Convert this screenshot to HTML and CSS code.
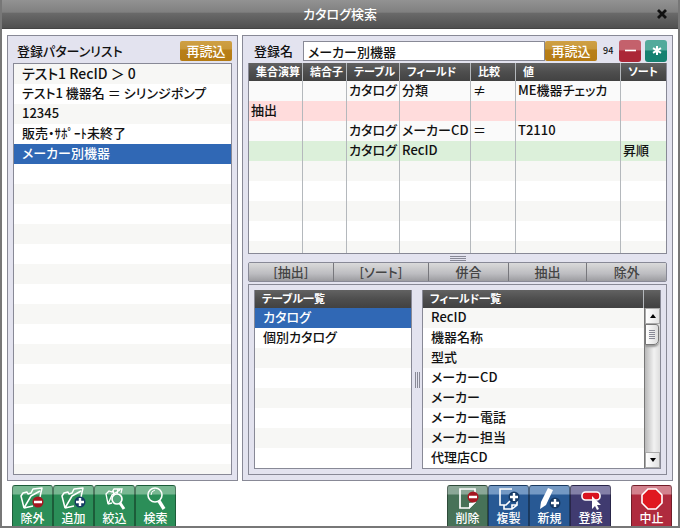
FILE: index.html
```html
<!DOCTYPE html>
<html lang="ja">
<head>
  <meta charset="UTF-8">
  <meta name="viewport" content="width=device-width, initial-scale=1.0">
  <title>カタログ検索</title>
  <link rel="stylesheet" href="styles.css">
</head>
<body>
  <header class="title-bar">
    <h1>カタログ検索</h1>
    <button class="close-btn" type="button" aria-label="閉じる">
      <svg width="10" height="10" viewBox="0 0 10 10"><path d="M1 1l8 8M9 1l-8 8" stroke="#111" stroke-width="2.8"/></svg>
    </button>
  </header>

  <main class="content">
    <section class="panel pattern-panel">
      <div class="panel-head">
        <h2>登録パターンリスト</h2>
        <button class="reload-btn" type="button">再読込</button>
      </div>
      <ul class="list pattern-list">
        <li><span class="wide">テスト1 RecID ＞ 0</span></li>
        <li>テスト1 機器名 ＝ シリンジポンプ</li>
        <li>12345</li>
        <li>販売・ｻﾎﾟｰﾄ未終了</li>
        <li class="selected">メーカー別機器</li>
      </ul>
    </section>

    <section class="panel detail-panel">
      <div class="panel-head name-row">
        <label for="patternName">登録名</label>
        <input type="text" id="patternName" value="メーカー別機器">
        <button class="reload-btn" type="button">再読込</button>
        <span class="count">94</span>
        <button class="square-btn remove" type="button" aria-label="削除">
          <svg width="22" height="22" viewBox="0 0 22 22"><path d="M6 10.5h11" stroke="#fff" stroke-width="1.6"/></svg>
        </button>
        <button class="square-btn all" type="button" aria-label="すべて">
          <svg width="22" height="22" viewBox="0 0 22 22"><path d="M12 6v9M8 8.2l8 4.6M16 8.2l-8 4.6" stroke="#fff" stroke-width="2"/></svg>
        </button>
      </div>

      <div class="criteria">
        <table>
          <colgroup>
            <col class="col-set"><col class="col-join"><col class="col-table"><col class="col-field"><col class="col-compare"><col><col class="col-sort">
          </colgroup>
          <thead>
            <tr><th>集合演算</th><th>結合子</th><th>テーブル</th><th>フィールド</th><th>比較</th><th>値</th><th>ソート</th></tr>
          </thead>
          <tbody>
            <tr><td></td><td></td><td>カタログ</td><td>分類</td><td>≠</td><td>ME機器チェッカ</td><td></td></tr>
            <tr class="extract"><td>抽出</td><td></td><td></td><td></td><td></td><td></td><td></td></tr>
            <tr><td></td><td></td><td>カタログ</td><td>メーカーCD</td><td>＝</td><td>T2110</td><td></td></tr>
            <tr class="sort"><td></td><td></td><td>カタログ</td><td>RecID</td><td></td><td></td><td>昇順</td></tr>
            <tr class="rest"><td></td><td></td><td></td><td></td><td></td><td></td><td></td></tr>
          </tbody>
        </table>
      </div>

      <div class="grip-row"><span class="grip"></span></div>

      <div class="actions">
        <button type="button">[抽出]</button>
        <button type="button">[ソート]</button>
        <button type="button">併合</button>
        <button type="button">抽出</button>
        <button type="button">除外</button>
      </div>

      <div class="sources">
        <div class="source">
          <h3>テーブル一覧</h3>
          <ul class="list">
            <li class="selected">カタログ</li>
            <li>個別カタログ</li>
          </ul>
        </div>
        <div class="grip-col"><span class="grip vertical"></span></div>
        <div class="source">
          <h3 class="with-corner">フィールド一覧</h3>
          <div class="scroll-area">
            <ul class="list">
              <li>RecID</li>
              <li>機器名称</li>
              <li>型式</li>
              <li>メーカーCD</li>
              <li>メーカー</li>
              <li>メーカー電話</li>
              <li>メーカー担当</li>
              <li>代理店CD</li>
            </ul>
            <div class="scrollbar">
              <button type="button" aria-label="上へ"><svg width="6" height="4" viewBox="0 0 6 4"><path d="M3 0l3 4H0z"/></svg></button>
              <div class="track"><span class="thumb"><span class="grip small"></span></span></div>
              <button type="button" aria-label="下へ"><svg width="6" height="4" viewBox="0 0 6 4"><path d="M3 4l3-4H0z"/></svg></button>
            </div>
          </div>
        </div>
      </div>
    </section>
  </main>

  <footer class="toolbar">
    <div class="tool-group">
      <button class="tool green" type="button">
        <svg width="30" height="24" viewBox="0 0 30 24">
          <path d="M6 22L3 10l2-3 4-1 1 2 3-1 2-4 9-1-2 9M6 22l7-12 9-5M6 22l9-2" fill="none" stroke="#fff" stroke-width="1.5" stroke-linejoin="round"/>
          <circle cx="20" cy="16" r="5.5" fill="#a51620"/><path d="M16 16h8" stroke="#fff" stroke-width="2.4"/>
        </svg>
        除外
      </button>
      <button class="tool green" type="button">
        <svg width="30" height="24" viewBox="0 0 30 24">
          <path d="M6 22L3 10l2-3 4-1 1 2 3-1 2-4 9-1-2 9M6 22l7-12 9-5M6 22l9-2" fill="none" stroke="#fff" stroke-width="1.5" stroke-linejoin="round"/>
          <circle cx="21" cy="16" r="5.5" fill="#153c63"/><path d="M17 16h8M21 12v8" stroke="#fff" stroke-width="2.4"/>
        </svg>
        追加
      </button>
      <button class="tool green" type="button">
        <svg width="30" height="24" viewBox="0 0 30 24">
          <path d="M8 18L6 8l3-3 3 1 2-3h8l-1 4M8 18l4-9 8-5M8 18l4-1M13 4l1 5M18 3l-1 5" fill="none" stroke="#fff" stroke-width="1.3"/>
          <circle cx="17" cy="13" r="5" fill="#4ea377" stroke="#fff" stroke-width="1.7"/><path d="M20 17l4 6" stroke="#fff" stroke-width="3"/>
        </svg>
        絞込
      </button>
      <button class="tool green" type="button">
        <svg width="30" height="24" viewBox="0 0 30 24">
          <circle cx="14" cy="9" r="7" fill="none" stroke="#fff" stroke-width="1.6"/>
          <path d="M10 9q0-4 4-5" fill="none" stroke="#fff"/><path d="M18 15l5 8" stroke="#fff" stroke-width="3.4"/>
        </svg>
        検索
      </button>
    </div>

    <div class="tool-group">
      <button class="tool moss" type="button">
        <svg width="30" height="24" viewBox="0 0 30 24">
          <path d="M7 3h15v13l-6 6H7z" fill="none" stroke="#fff" stroke-width="1.7"/><path d="M23 16l-7 7v-6z" fill="#fff"/>
          <circle cx="20" cy="11" r="5.5" fill="#a51620"/><path d="M16 11h8" stroke="#fff" stroke-width="2.4"/>
        </svg>
        削除
      </button>
      <button class="tool blue" type="button">
        <svg width="30" height="24" viewBox="0 0 30 24">
          <path d="M18 3H6v16h6l4-4M10 19v4h8l5-4v-4M18 23v-4h5" fill="none" stroke="#fff" stroke-width="1.6"/>
          <circle cx="20" cy="11" r="5.5" fill="#173b66"/><path d="M16 11h8M20 7v8" stroke="#fff" stroke-width="2.4"/>
        </svg>
        複製
      </button>
      <button class="tool blue" type="button">
        <svg width="30" height="24" viewBox="0 0 30 24">
          <path d="M13 2l5 2-7 15-6 4 1-7z" fill="#fff"/>
          <circle cx="20" cy="17" r="5.5" fill="#173b66"/><path d="M16 17h8M20 13v8" stroke="#fff" stroke-width="2.4"/>
        </svg>
        新規
      </button>
      <button class="tool purple" type="button">
        <svg width="30" height="24" viewBox="0 0 30 24">
          <rect x="6" y="6" width="18" height="8" rx="3.5" fill="#d9141f" stroke="#fff" stroke-width="1.6"/>
          <path d="M16 10v13l3-3 2 4 2-1-2-4h4z" fill="#fff"/>
        </svg>
        登録
      </button>
      <button class="tool red stop" type="button">
        <svg width="30" height="24" viewBox="0 0 30 24">
          <path d="M11 3h8l6 6v8l-6 6h-8l-6-6V9z" fill="#e01820" stroke="#fff" stroke-width="1.6"/>
        </svg>
        中止
      </button>
    </div>
  </footer>
</body>
</html>
```

FILE: styles.css
```css
* {
  box-sizing: border-box;
}

body {
  margin: 0;
  height: 100vh;
  min-height: 400px;
  display: flex;
  flex-direction: column;
  background: #fff;
  border: 2px solid #777;
  border-top: none;
  color: #111;
  font-family: "Noto Sans CJK JP", sans-serif;
  font-size: 13px;
  font-weight: 500;
  font-feature-settings: "palt";
  line-height: 20px;
}

h1, h2, h3, ul {
  margin: 0;
  padding: 0;
  font-size: 13px;
  font-weight: 500;
}

button, input {
  margin: 0;
  padding: 0;
  border: none;
  font: inherit;
  font-feature-settings: inherit;
}

/* title bar */
.title-bar {
  flex: none;
  display: grid;
  grid-template-columns: 1fr auto 1fr;
  align-items: center;
  height: 29px;
  margin: 0 -2px;
  padding: 0 13px;
  background: linear-gradient(#929292, #808080 44%, #6a6a6a 46%, #505050);
  border-bottom: 1px solid #444;
}

.title-bar h1 {
  grid-column: 2;
  color: #fff;
  line-height: 18px;
}

.close-btn {
  display: flex;
  justify-self: end;
  background: none;
}

/* panels */
.content {
  flex: 1;
  min-height: 0;
  display: grid;
  grid-template-columns: 231fr 431fr;
  gap: 4px;
  padding: 6px 5px 4px;
}

.panel {
  min-width: 0;
  min-height: 0;
  display: flex;
  flex-direction: column;
  padding: 3px 5px 5px;
  background: #e3e3ef;
  border: 1px solid #888996;
}

.panel-head {
  flex: none;
  display: flex;
  align-items: center;
  height: 24px;
  line-height: 18px;
}

.pattern-panel .panel-head {
  justify-content: space-between;
  padding-left: 4px;
}

.reload-btn {
  width: 52px;
  height: 20px;
  border-radius: 2px;
  background: linear-gradient(#cfa044, #c8983a 40%, #b98018 45%, #b47b14);
  color: #fff;
}

.name-row label {
  flex: none;
  width: 55px;
  padding-left: 6px;
}

.name-row input {
  flex: 1;
  min-width: 0;
  height: 20px;
  padding: 0 4px;
  background: #fff;
  border: 1px solid #888996;
  color: #111;
}

.count {
  width: 22px;
  padding-left: 6px;
  font-size: 9px;
}

.square-btn {
  display: flex;
  width: 22px;
  height: 22px;
  border-radius: 3px;
}

.square-btn.remove {
  margin-right: 4px;
  background: linear-gradient(#c4616c 45%, #ab2737 50%);
}

.square-btn.all {
  background: linear-gradient(#52aa9b 45%, #168171 50%);
}

/* striped lists */
.list {
  flex: 1;
  min-width: 0;
  min-height: 0;
  overflow: hidden;
  list-style: none;
  background: repeating-linear-gradient(#f7f7f5 0 20px, #fff 20px 40px);
}

.list li {
  height: 20px;
  padding-left: 8px;
  line-height: 18px;
  white-space: nowrap;
}

.list .selected {
  background: #3068b5;
  color: #fff;
}

.pattern-list {
  border: 1px solid #888996;
}

.wide {
  font-size: 14px;
}

/* criteria table */
.criteria {
  flex: none;
  height: 191px;
  overflow: hidden;
  border: 1px solid #888996;
  border-top: none;
}

.criteria table {
  width: 100%;
  height: 100%;
  table-layout: fixed;
  border-collapse: separate;
  border-spacing: 0;
  background: #fafafa;
}

.criteria th,
.criteria td {
  height: 20px;
  padding: 0 0 0 2px;
  border-right: 1px solid #b4b8bc;
  line-height: 18px;
  text-align: left;
  vertical-align: top;
  white-space: nowrap;
}

.criteria th:last-child,
.criteria td:last-child {
  border-right: none;
}

.criteria th,
.source h3 {
  height: 18px;
  padding-left: 7px;
  background: linear-gradient(#626262, #4e4e4e 50%, #424242);
  color: #fff;
  font-size: 11px;
  font-weight: 700;
  line-height: 16px;
}

.criteria .extract td {
  background: #ffdcdc;
}

.criteria .sort td {
  background: #dcf0da;
}

.criteria .rest td {
  height: auto;
  background: repeating-linear-gradient(#f7f7f5 0 20px, #fff 20px 40px);
}

.col-set { width: 54px; }
.col-join { width: 44px; }
.col-table { width: 53px; }
.col-field { width: 71px; }
.col-compare { width: 45px; }
.col-sort { width: 45px; }

/* splitter handles */
.grip-row {
  flex: none;
  display: flex;
  align-items: center;
  justify-content: center;
  height: 8px;
}

.grip {
  width: 16px;
  height: 5px;
  background: repeating-linear-gradient(#888996 0 1px, transparent 1px 2px);
}

.grip.vertical {
  width: 5px;
  height: 16px;
  background: repeating-linear-gradient(90deg, #888996 0 1px, transparent 1px 2px);
}

.grip.small {
  width: 6px;
  height: 9px;
}

.grip-col {
  display: flex;
  align-items: center;
  justify-content: center;
}

.actions {
  flex: none;
  display: grid;
  grid-template-columns: 85fr 96fr 80fr 79fr 79fr;
  height: 20px;
  overflow: hidden;
  border: 1px solid #888996;
  border-radius: 2px;
}

.actions button {
  background: linear-gradient(#dadada, #bcbcc0 60%, #9c9ca0);
  border-right: 1px solid #77777c;
  color: #444;
  line-height: 16px;
}

.actions button:last-child {
  border-right: none;
}

/* table and field lists */
.sources {
  flex: 1;
  min-height: 0;
  display: grid;
  grid-template-columns: 158fr 10px 239fr;
  margin-top: 2px;
  padding: 5px;
  border: 1px solid #888996;
}

.source {
  min-width: 0;
  min-height: 0;
  display: flex;
  flex-direction: column;
  border: 1px solid #888996;
  border-top: none;
}

.source h3 {
  flex: none;
}

.source h3.with-corner::after {
  content: "";
  float: right;
  width: 16px;
  height: 18px;
  border-left: 1px solid #b4b8bc;
}

.scroll-area {
  flex: 1;
  min-height: 0;
  display: flex;
}

.scrollbar {
  flex: none;
  display: flex;
  flex-direction: column;
  width: 16px;
  border-left: 1px solid #777;
  background: linear-gradient(90deg, #b8b8b8, #f2f2f2 60%, #ddd);
}

.scrollbar button {
  display: flex;
  align-items: center;
  justify-content: center;
  height: 16px;
  background: linear-gradient(90deg, #fff, #e2e2e2);
  border: 1px solid #aaa;
}

.track {
  flex: 1;
}

.thumb {
  display: flex;
  align-items: center;
  justify-content: center;
  width: 14px;
  height: 21px;
  background: linear-gradient(90deg, #fff, #ddd);
  border: 1px solid #777;
  border-radius: 0 3px 5px 0;
  box-shadow: 0 2px 2px #999;
}

/* bottom buttons */
.toolbar {
  flex: none;
  display: flex;
  justify-content: space-between;
  padding: 0 6px 0 10px;
}

.tool-group {
  display: flex;
}

.tool {
  display: flex;
  flex-direction: column;
  align-items: center;
  width: 41px;
  height: 41px;
  overflow: hidden;
  border: 1px solid rgba(0, 0, 0, 0.35);
  border-bottom: none;
  border-radius: 3px 3px 0 0;
  color: #fff;
  font-size: 12px;
  line-height: 16px;
}

.tool svg {
  flex: none;
}

.tool.green {
  background: linear-gradient(#78b892 8px, #2b8e58 9px);
}

.tool.moss {
  background: linear-gradient(#8ba797 8px, #477258 9px);
}

.tool.blue {
  background: linear-gradient(#7499c4 8px, #285994 9px);
}

.tool.purple {
  background: linear-gradient(#8480a8 8px, #403b70 9px);
}

.tool.red {
  background: linear-gradient(#d3828e 8px, #af2b3e 9px);
}

.tool.stop {
  margin-left: 20px;
}
```
